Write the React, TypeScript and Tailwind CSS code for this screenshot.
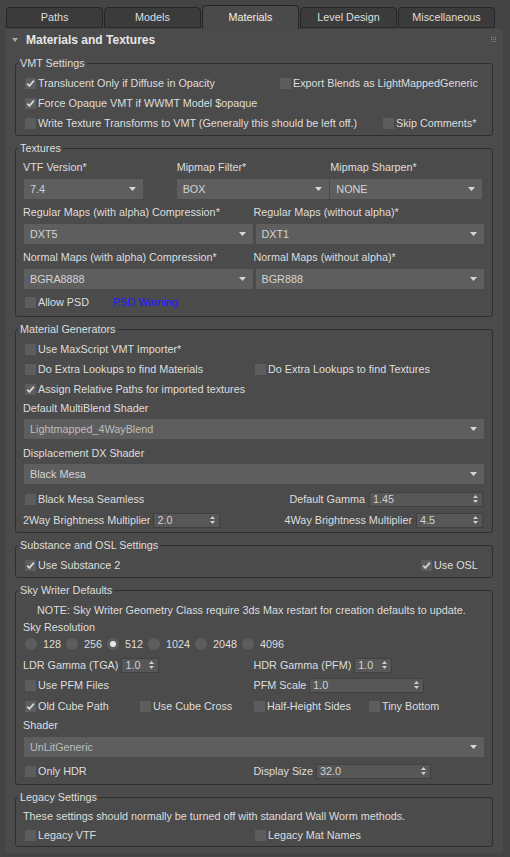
import React from "react";

const F = "font-['Liberation_Sans',Arial,sans-serif]";

function Check({ checked = false, label, className = "" }: { checked?: boolean; label: string; className?: string }) {
  return (
    <div className={`flex items-center h-[20px] pl-[2px] shrink-0 ${className}`}>
      <span className="w-[11px] h-[11px] bg-[#5d5d5d] mr-[2px] flex items-center justify-center shrink-0">
        {checked && (
          <svg width="9" height="9" viewBox="0 0 9 9">
            <path d="M1.2 4.6 L3.4 6.9 L7.9 1.6" stroke="#d4d4d4" strokeWidth="1.8" fill="none" />
          </svg>
        )}
      </span>
      <span className="whitespace-nowrap">{label}</span>
    </div>
  );
}

function Arrow() {
  return (
    <svg width="7" height="4" viewBox="0 0 7 4" className="shrink-0">
      <path d="M0 0 H7 L3.5 4 Z" fill="#d6d6d6" />
    </svg>
  );
}

function Dropdown({ value, className = "", dim = false }: { value: string; className?: string; dim?: boolean }) {
  return (
    <div
      className={`h-[20px] bg-[#5e5e5e] flex items-center justify-between pl-[6px] pr-[7px] ${
        dim ? "text-[#bdbdbd]" : "text-[#d4d4d4]"
      } ${className}`}
    >
      <span className="whitespace-nowrap">{value}</span>
      <Arrow />
    </div>
  );
}

function Spinner({ value, className = "" }: { value: string; className?: string }) {
  return (
    <div className={`h-[15px] bg-[#575757] border border-[#404040] flex items-center justify-between pl-[3px] pr-[4px] text-[#d2d2d2] shrink-0 ${className}`}>
      <span className="whitespace-nowrap leading-[13px]">{value}</span>
      <svg width="5" height="8" viewBox="0 0 5 8" className="shrink-0">
        <path d="M0 3 L2.5 0 L5 3 Z" fill="#cfcfcf" />
        <path d="M0 5 L2.5 8 L5 5 Z" fill="#cfcfcf" />
      </svg>
    </div>
  );
}

function Radio({ checked = false, label }: { checked?: boolean; label: string }) {
  return (
    <div className="flex items-center gap-[6px]">
      <span className="w-[12px] h-[12px] rounded-full bg-[#5d5d5d] flex items-center justify-center">
        {checked && <span className="w-[6px] h-[6px] rounded-full bg-[#e8e8e8]" />}
      </span>
      <span>{label}</span>
    </div>
  );
}

function Group({ title, children }: { title: string; children: React.ReactNode }) {
  return (
    <fieldset className="border border-[#2f2f2f] rounded-[3px] p-0 m-0 min-w-0">
      <legend className="ml-[2px] px-[2px] leading-[14px]">{title}</legend>
      <div className="pl-[7px] pr-[8px]">{children}</div>
    </fieldset>
  );
}

function Label({ children, className = "" }: { children: React.ReactNode; className?: string }) {
  return <div className={`h-[16px] leading-[16px] whitespace-nowrap ${className}`}>{children}</div>;
}

const tabs = ["Paths", "Models", "Materials", "Level Design", "Miscellaneous"];

export default function App() {
  return (
    <div className={`w-[510px] h-[857px] bg-[#444444] overflow-hidden text-[10.8px] text-[#dedede] ${F}`}>
      {/* Tabs */}
      <div className="h-[29px] flex items-end pl-[6px] gap-[1px]">
        {tabs.map((t) => {
          const active = t === "Materials";
          return (
            <div
              key={t}
              className={
                active
                  ? "w-[97px] h-[24px] bg-[#4a4a4a] border border-b-0 border-[#262626] rounded-t-[4px] flex items-center justify-center text-[#f4f2e6]"
                  : "w-[97px] h-[21px] mb-[1px] bg-[#3b3b3b] border border-[#262626] rounded-t-[4px] flex items-center justify-center"
              }
            >
              {t}
            </div>
          );
        })}
      </div>

      {/* Panel */}
      <div className="ml-[5px] w-[498px] h-[824px] bg-[#4b4b4b] rounded-[3px] px-[10px] pb-[6px]">
        <div className="relative h-[22px] -mx-[10px] pl-[7px] flex items-center">
          <svg width="6" height="4" viewBox="0 0 6 4" className="mr-[8px]">
            <path d="M0 0 H6 L3 4 Z" fill="#a8a8a8" />
          </svg>
          <span className="font-bold text-[12px] text-[#e6e6e6]">Materials and Textures</span>
          <div className="absolute right-[7px] top-[8px] grid grid-cols-3 gap-[1px]">
            {Array.from({ length: 9 }).map((_, i) => (
              <span key={i} className="w-[1px] h-[1px] bg-[#8a8a8a]" />
            ))}
          </div>
        </div>

        <div className="mt-[5px] flex flex-col gap-[5px]">
          {/* VMT Settings */}
          <Group title="VMT Settings">
            <div className="pt-[3px] pb-[2px]">
              <div className="flex">
                <Check checked label="Translucent Only if Diffuse in Opacity" className="w-[255px]" />
                <Check label="Export Blends as LightMappedGeneric" />
              </div>
              <Check checked label="Force Opaque VMT if WWMT Model $opaque" />
              <div className="flex">
                <Check label="Write Texture Transforms to VMT (Generally this should be left off.)" className="w-[358px]" />
                <Check label="Skip Comments*" />
              </div>
            </div>
          </Group>

          {/* Textures */}
          <Group title="Textures">
            <div className="pt-[4px] pb-[4px]">
              <div className="grid grid-cols-3">
                <Label>VTF Version*</Label>
                <Label>Mipmap Filter*</Label>
                <Label>Mipmap Sharpen*</Label>
              </div>
              <div className="grid grid-cols-3 mt-[4px]">
                <Dropdown value="7.4" className="ml-[1px] w-[119px]" />
                <Dropdown value="BOX" className="w-[152px]" />
                <Dropdown value="NONE" className="w-[152px]" />
              </div>
              <div className="grid grid-cols-2 mt-[5px]">
                <Label>Regular Maps (with alpha) Compression*</Label>
                <Label>Regular Maps (without alpha)*</Label>
              </div>
              <div className="grid grid-cols-2 mt-[4px]">
                <Dropdown value="DXT5" className="ml-[1px] w-[229px]" />
                <Dropdown value="DXT1" className="ml-[2px] w-[228px]" />
              </div>
              <div className="grid grid-cols-2 mt-[5px]">
                <Label>Normal Maps (with alpha) Compression*</Label>
                <Label>Normal Maps (without alpha)*</Label>
              </div>
              <div className="grid grid-cols-2 mt-[4px]">
                <Dropdown value="BGRA8888" className="ml-[1px] w-[229px]" />
                <Dropdown value="BGR888" className="ml-[2px] w-[228px]" />
              </div>
              <div className="flex items-center mt-[3px]">
                <Check label="Allow PSD" className="w-[90px]" />
                <span className="text-[#1c1cff]">PSD Warning</span>
              </div>
            </div>
          </Group>

          {/* Material Generators */}
          <Group title="Material Generators">
            <div className="pt-[3px] pb-[2px]">
              <Check label="Use MaxScript VMT Importer*" />
              <div className="flex">
                <Check label="Do Extra Lookups to find Materials" className="w-[230px]" />
                <Check label="Do Extra Lookups to find Textures" />
              </div>
              <Check checked label="Assign Relative Paths for imported textures" />
              <Label className="mt-[1px]">Default MultiBlend Shader</Label>
              <Dropdown value="Lightmapped_4WayBlend" dim className="mt-[3px] ml-[1px]" />
              <Label className="mt-[6px]">Displacement DX Shader</Label>
              <Dropdown value="Black Mesa" className="mt-[3px] ml-[1px]" />
              <div className="flex items-center justify-between mt-[5px] h-[20px]">
                <Check label="Black Mesa Seamless" />
                <div className="flex items-center gap-[4px] mr-[1px]">
                  <span>Default Gamma</span>
                  <Spinner value="1.45" className="w-[114px]" />
                </div>
              </div>
              <div className="flex items-center justify-between mt-[1px] h-[20px]">
                <div className="flex items-center gap-[3px]">
                  <span>2Way Brightness Multiplier</span>
                  <Spinner value="2.0" className="w-[67px]" />
                </div>
                <div className="flex items-center gap-[4px] mr-[1px]">
                  <span>4Way Brightness Multiplier</span>
                  <Spinner value="4.5" className="w-[67px]" />
                </div>
              </div>
            </div>
          </Group>

          {/* Substance and OSL */}
          <Group title="Substance and OSL Settings">
            <div className="pt-[3px] pb-[2px] flex">
              <Check checked label="Use Substance 2" className="w-[396px]" />
              <Check checked label="Use OSL" />
            </div>
          </Group>

          {/* Sky Writer */}
          <Group title="Sky Writer Defaults">
            <div className="pt-[5px] pb-[3px]">
              <Label className="pl-[14px]">
                NOTE: Sky Writer Geometry Class require 3ds Max restart for creation defaults to update.
              </Label>
              <Label className="mt-[1px]">Sky Resolution</Label>
              <div className="h-[18px] flex items-center gap-[5px] pl-[2px]">
                <Radio label="128" />
                <Radio label="256" />
                <Radio checked label="512" />
                <Radio label="1024" />
                <Radio label="2048" />
                <Radio label="4096" />
              </div>
              <div className="grid grid-cols-2 h-[18px] mt-[3px]">
                <div className="flex items-center gap-[3px]">
                  <span>LDR Gamma (TGA)</span>
                  <Spinner value="1.0" className="w-[38px]" />
                </div>
                <div className="flex items-center gap-[3px]">
                  <span>HDR Gamma (PFM)</span>
                  <Spinner value="1.0" className="w-[38px]" />
                </div>
              </div>
              <div className="grid grid-cols-2 h-[20px] mt-[1px]">
                <Check label="Use PFM Files" />
                <div className="flex items-center gap-[3px]">
                  <span>PFM Scale</span>
                  <Spinner value="1.0" className="w-[115px]" />
                </div>
              </div>
              <div className="flex mt-[1px]">
                <Check checked label="Old Cube Path" className="w-[115px]" />
                <Check label="Use Cube Cross" className="w-[114px]" />
                <Check label="Half-Height Sides" className="w-[115px]" />
                <Check label="Tiny Bottom" />
              </div>
              <Label className="mt-[1px]">Shader</Label>
              <Dropdown value="UnLitGeneric" dim className="mt-[4px] ml-[1px]" />
              <div className="grid grid-cols-2 h-[20px] mt-[4px]">
                <Check label="Only HDR" />
                <div className="flex items-center gap-[3px]">
                  <span>Display Size</span>
                  <Spinner value="32.0" className="w-[115px]" />
                </div>
              </div>
            </div>
          </Group>

          {/* Legacy */}
          <Group title="Legacy Settings">
            <div className="pt-[4px] pb-[1px]">
              <Label>These settings should normally be turned off with standard Wall Worm methods.</Label>
              <div className="flex mt-[1px]">
                <Check label="Legacy VTF" className="w-[230px]" />
                <Check label="Legacy Mat Names" />
              </div>
            </div>
          </Group>
        </div>
      </div>
    </div>
  );
}
